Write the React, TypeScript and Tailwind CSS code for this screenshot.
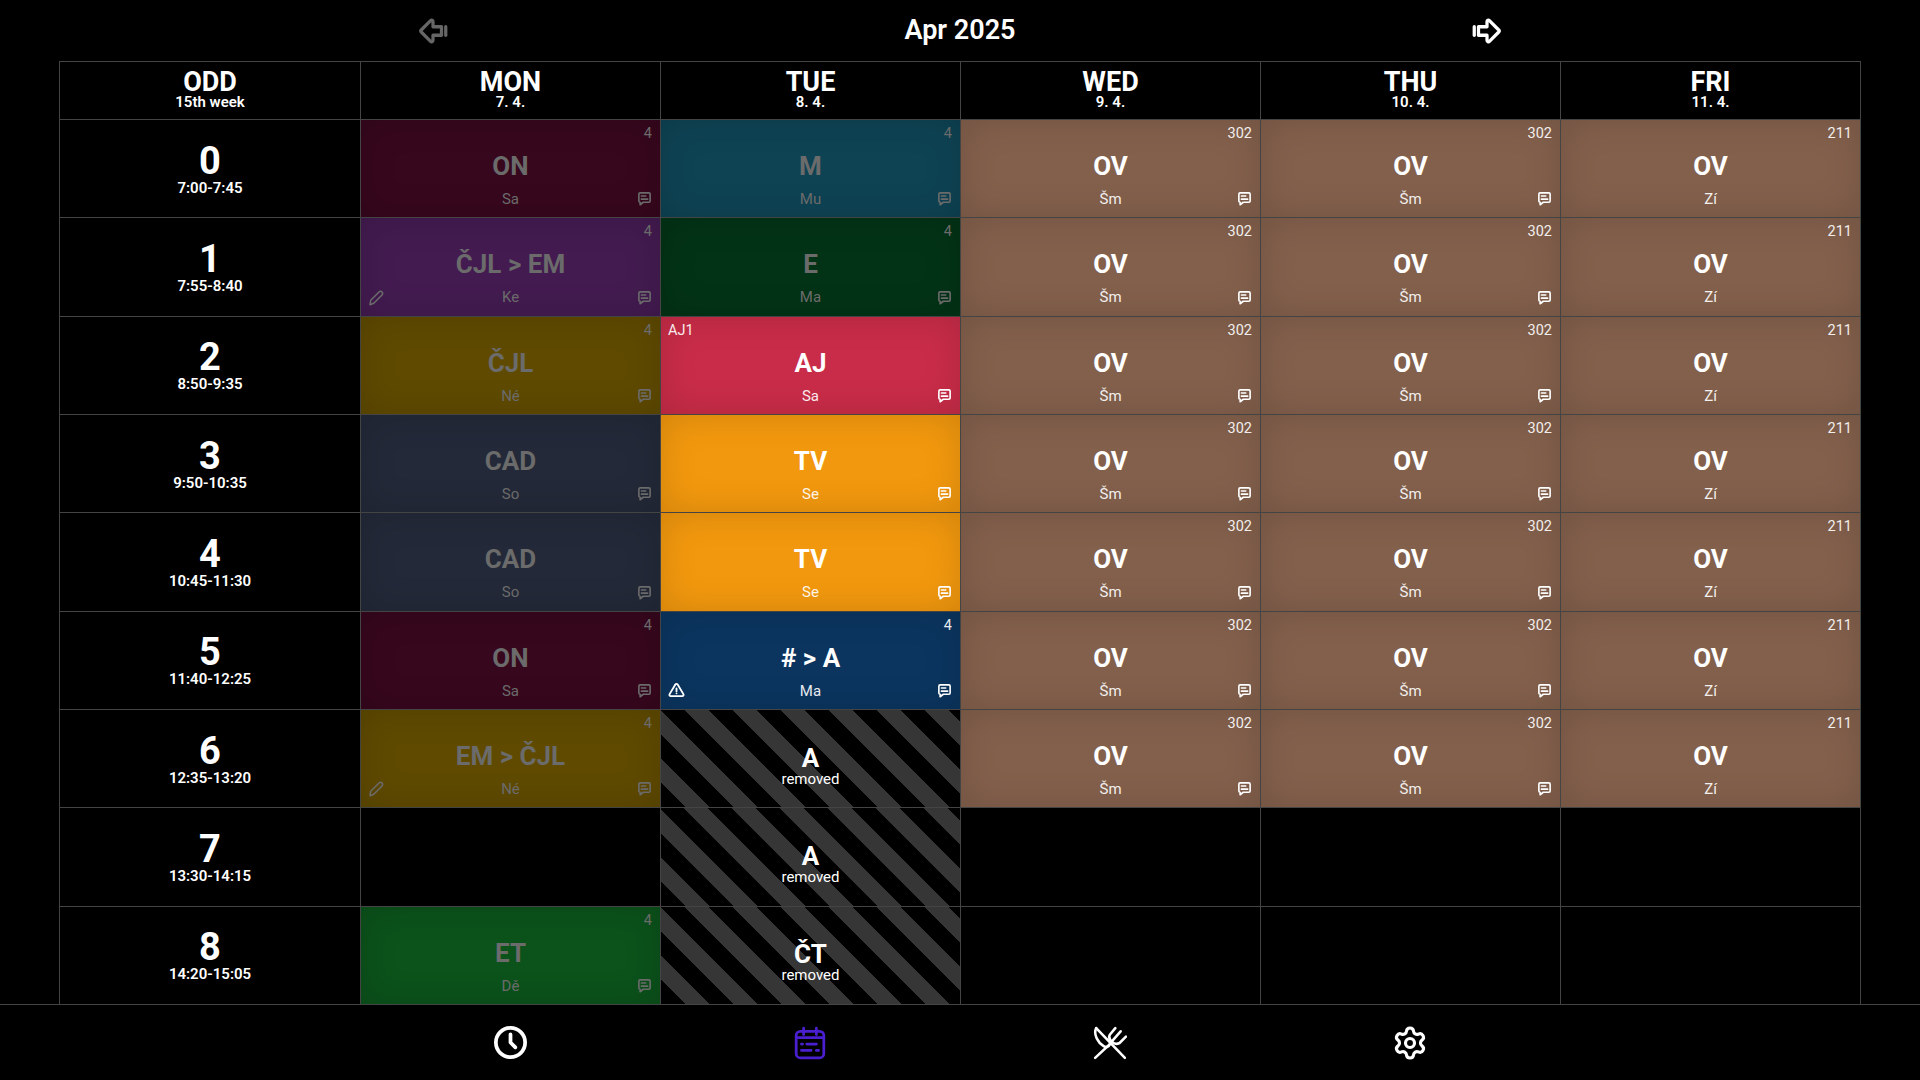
import { TbArrowBigLeftLine, TbArrowBigRightLine, TbClock, TbAlertTriangle } from 'react-icons/tb';
import { Settings } from 'lucide-react';

type Lesson = {
  subject: string;
  teacher: string;
  room: string;
  bg: string;
  dim?: boolean;
  edit?: boolean;
  warn?: boolean;
  roomLeft?: boolean;
  noComment?: boolean;
};

const days = [
  { name: 'MON', date: '7. 4.' },
  { name: 'TUE', date: '8. 4.' },
  { name: 'WED', date: '9. 4.' },
  { name: 'THU', date: '10. 4.' },
  { name: 'FRI', date: '11. 4.' },
];

const hours = ['7:00-7:45', '7:55-8:40', '8:50-9:35', '9:50-10:35', '10:45-11:30', '11:40-12:25', '12:35-13:20', '13:30-14:15', '14:20-15:05'];

const mon: (Lesson | null)[] = [
  { subject: 'ON', teacher: 'Sa', room: '4', bg: 'bg-[#37071d]', dim: true },
  { subject: 'ČJL > EM', teacher: 'Ke', room: '4', bg: 'bg-[#431b50]', dim: true, edit: true },
  { subject: 'ČJL', teacher: 'Né', room: '4', bg: 'bg-[#5f4a00]', dim: true },
  { subject: 'CAD', teacher: 'So', room: '', bg: 'bg-[#232938]', dim: true },
  { subject: 'CAD', teacher: 'So', room: '', bg: 'bg-[#232938]', dim: true },
  { subject: 'ON', teacher: 'Sa', room: '4', bg: 'bg-[#37071d]', dim: true },
  { subject: 'EM > ČJL', teacher: 'Né', room: '4', bg: 'bg-[#5f4a00]', dim: true, edit: true },
  null,
  { subject: 'ET', teacher: 'Dě', room: '4', bg: 'bg-[#0b521b]', dim: true },
];

const tue: (Lesson | string)[] = [
  { subject: 'M', teacher: 'Mu', room: '4', bg: 'bg-[#0e4354]', dim: true },
  { subject: 'E', teacher: 'Ma', room: '4', bg: 'bg-[#033316]', dim: true },
  { subject: 'AJ', teacher: 'Sa', room: 'AJ1', bg: 'bg-[#c92c48]', roomLeft: true },
  { subject: 'TV', teacher: 'Se', room: '', bg: 'bg-[#f2980e]' },
  { subject: 'TV', teacher: 'Se', room: '', bg: 'bg-[#f2980e]' },
  { subject: '# > A', teacher: 'Ma', room: '4', bg: 'bg-[#0b355f]', warn: true },
  'A',
  'A',
  'ČT',
];

function CommentIcon({ className }: { className: string }) {
  return (
    <svg viewBox="0 0 24 24" fill="none" stroke="currentColor" strokeWidth="2.6" strokeLinejoin="round" strokeLinecap="round" className={className}>
      <path d="M5 3h14a2 2 0 0 1 2 2v11a2 2 0 0 1-2 2h-9l-5 4v-4H5a2 2 0 0 1-2-2V5a2 2 0 0 1 2-2z" />
      <path d="M7 8h7M7 13h10" />
    </svg>
  );
}

function PencilIcon({ className }: { className: string }) {
  return (
    <svg viewBox="0 0 24 24" fill="none" stroke="currentColor" strokeWidth="2" strokeLinejoin="round" strokeLinecap="round" className={className}>
      <path d="M4 21l1-6L16 4c1.2-1.2 3-1.2 4 0s1.200 2.800 0 4L9 19z" />
    </svg>
  );
}

function CalendarIcon({ className }: { className: string }) {
  return (
    <svg viewBox="0 0 32 32" fill="none" stroke="currentColor" strokeWidth="2.6" strokeLinecap="round" strokeLinejoin="round" className={className}>
      <rect x="3" y="5" width="26" height="25" rx="4" />
      <path d="M10 2v6M22 2v6M3 11h26M13 17h9M8 23h9M8 17h1M22 23h2" />
    </svg>
  );
}

function CutleryIcon({ className }: { className: string }) {
  return (
    <svg viewBox="0 0 32 32" fill="none" stroke="currentColor" strokeWidth="2.4" strokeLinecap="round" strokeLinejoin="round" className={className}>
      <path d="M3 2L30 30" />
      <path d="M3 2C0 8 5 16 10 19c2.500 1.500 5 .5 6-2" />
      <path d="M2 30L17 16" />
      <path d="M21 2l-5 6c-2 3 0 5 2 7s4 2.500 7 1l6-6M26 5l-7 8" />
    </svg>
  );
}

function LessonCell({ lesson }: { lesson: Lesson }) {
  const tone = lesson.dim ? 'text-[#6b6b6b]' : 'text-white';
  return (
    <div className={`relative flex flex-col items-center pt-[31px] shadow-[inset_0_0_36px_rgba(0,0,0,0.14)] ${tone} ${lesson.bg}`}>
      {lesson.room && (
        <span className={`absolute top-[4px] text-[14.5px] leading-5 ${lesson.roomLeft ? 'left-[7px]' : 'right-[8px]'} ${lesson.dim ? '' : 'opacity-90'}`}>{lesson.room}</span>
      )}
      <span className="text-[26px] leading-[30px] font-bold whitespace-nowrap">{lesson.subject}</span>
      <span className={`mt-[8px] text-[15px] leading-5 ${lesson.dim ? '' : 'opacity-90'}`}>{lesson.teacher}</span>
      {!lesson.noComment && <CommentIcon className="absolute right-[8px] bottom-[11px] h-[15px] w-[15px]" />}
      {lesson.edit && <PencilIcon className="absolute bottom-[9px] left-[6px] h-[18px] w-[18px]" />}
      {lesson.warn && <TbAlertTriangle strokeWidth={2.6} className="absolute bottom-[10px] left-[7px] h-[17px] w-[17px]" />}
    </div>
  );
}

function RemovedCell({ subject }: { subject: string }) {
  return (
    <div className="flex flex-col items-center justify-center bg-[repeating-linear-gradient(45deg,#000_0,#000_17px,#363636_17px,#363636_34px)] pt-[15px] text-white">
      <span className="text-[26px] leading-[26px] font-bold">{subject}</span>
      <span className="text-[15px] leading-[17px]">removed</span>
    </div>
  );
}

function HourCell({ index, time }: { index: number; time: string }) {
  return (
    <div className="flex flex-col items-center justify-center bg-black pt-[1px] text-white">
      <span className="text-[38px] leading-[38px] font-bold">{index}</span>
      <span className="text-[15px] leading-[17px] font-semibold">{time}</span>
    </div>
  );
}

function HeaderCell({ title, sub }: { title: string; sub: string }) {
  return (
    <div className="flex flex-col items-center justify-center bg-black pb-[3px] text-white">
      <span className="text-[27px] leading-[27px] font-bold">{title}</span>
      <span className="text-[15px] leading-[13px] font-semibold">{sub}</span>
    </div>
  );
}

export default function App() {
  return (
    <div className="flex h-screen w-full flex-col bg-black font-['Roboto',sans-serif] text-white">
      <div className="mx-auto grid h-[61px] w-[1581px] shrink-0 grid-cols-3 items-center">
        <TbArrowBigLeftLine strokeWidth={2.3} className="h-[34px] w-[34px] justify-self-center text-[#666]" />
        <span className="text-center text-[27px] font-semibold">Apr 2025</span>
        <TbArrowBigRightLine strokeWidth={2.3} className="h-[34px] w-[34px] justify-self-center" />
      </div>

      <div className="ml-[59px] grid h-[943px] w-[1802px] shrink-0 grid-cols-[300px_repeat(5,299px)] grid-rows-[57px_repeat(9,1fr)] gap-px bg-[#444] px-px pt-px">
        <HeaderCell title="ODD" sub="15th week" />
        {days.map((d) => (
          <HeaderCell key={d.name} title={d.name} sub={d.date} />
        ))}
        {hours.map((time, i) => {
          const monLesson = mon[i];
          const tueLesson = tue[i];
          return (
            <div key={time} className="contents">
              <HourCell index={i} time={time} />
              {monLesson ? <LessonCell lesson={monLesson} /> : <div className="bg-black" />}
              {typeof tueLesson === 'string' ? <RemovedCell subject={tueLesson} /> : <LessonCell lesson={tueLesson} />}
              {i < 7 ? <LessonCell lesson={{ subject: 'OV', teacher: 'Šm', room: '302', bg: 'bg-[#83604c]' }} /> : <div className="bg-black" />}
              {i < 7 ? <LessonCell lesson={{ subject: 'OV', teacher: 'Šm', room: '302', bg: 'bg-[#83604c]' }} /> : <div className="bg-black" />}
              {i < 7 ? <LessonCell lesson={{ subject: 'OV', teacher: 'Zí', room: '211', bg: 'bg-[#83604c]', noComment: true }} /> : <div className="bg-black" />}
            </div>
          );
        })}
      </div>

      <div className="flex-1 border-t border-[#444] pl-[59px]">
        <div className="grid h-full w-[1802px] grid-cols-[301px_repeat(5,300px)] items-center">
          <span />
          <TbClock strokeWidth={2.3} className="h-[39px] w-[39px] justify-self-center" />
          <CalendarIcon className="h-[34px] w-[34px] justify-self-center text-[#4a1fd0]" />
          <CutleryIcon className="h-[34px] w-[34px] justify-self-center" />
          <Settings strokeWidth={2.1} className="h-[36px] w-[36px] justify-self-center" />
          <span />
        </div>
      </div>
    </div>
  );
}
